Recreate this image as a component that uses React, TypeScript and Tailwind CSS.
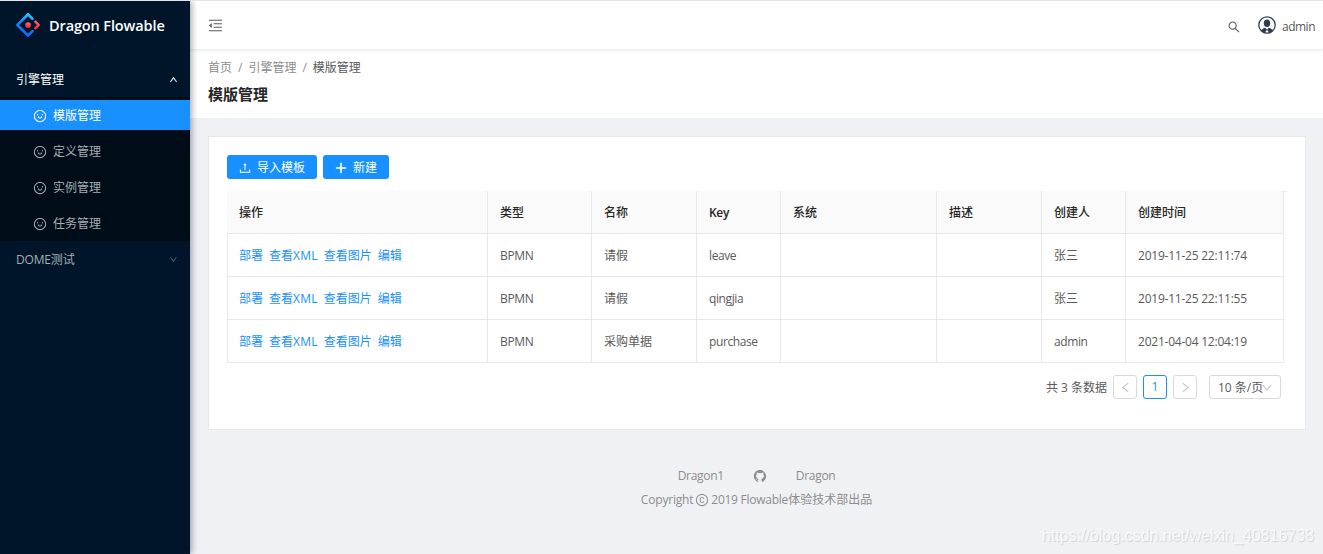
import { useState } from "react"
import {
  AiOutlineMenuFold,
  AiOutlineSearch,
  AiOutlineSmile,
  AiOutlineUp,
  AiOutlineDown,
  AiOutlineLeft,
  AiOutlineRight,
  AiOutlineUpload,
  AiOutlinePlus,
  AiOutlineCopyright,
  AiFillGithub,
} from "react-icons/ai"

const menuItems = ["模版管理", "定义管理", "实例管理", "任务管理"]

const columns = [
  { title: "操作", width: "w-[261px]" },
  { title: "类型", width: "w-[104px]" },
  { title: "名称", width: "w-[105px]" },
  { title: "Key", width: "w-[84px]" },
  { title: "系统", width: "w-[156px]" },
  { title: "描述", width: "w-[105px]" },
  { title: "创建人", width: "w-[84px]" },
  { title: "创建时间", width: "w-[158px]" },
]

const rows = [
  { type: "BPMN", name: "请假", key: "leave", system: "", desc: "", creator: "张三", time: "2019-11-25 22:11:74" },
  { type: "BPMN", name: "请假", key: "qingjia", system: "", desc: "", creator: "张三", time: "2019-11-25 22:11:55" },
  { type: "BPMN", name: "采购单据", key: "purchase", system: "", desc: "", creator: "admin", time: "2021-04-04 12:04:19" },
]

function Logo() {
  return (
    <svg className="size-6 shrink-0" viewBox="0 0 200 200">
      <defs>
        <linearGradient id="blue" x1="62%" y1="0%" x2="40%" y2="100%">
          <stop offset="0%" stopColor="#29cdff" />
          <stop offset="38%" stopColor="#148eff" />
          <stop offset="100%" stopColor="#0a60ff" />
        </linearGradient>
        <linearGradient id="red" x1="69%" y1="-13%" x2="54%" y2="120%">
          <stop offset="0%" stopColor="#fa816e" />
          <stop offset="41%" stopColor="#f74a5c" />
          <stop offset="100%" stopColor="#f51d2c" />
        </linearGradient>
      </defs>
      <path
        fill="url(#blue)"
        d="M91.588 4.177 4.18 91.513c-4.7 4.695-4.7 12.279 0 16.974l87.408 87.336c4.7 4.696 12.29 4.696 16.989 0l36.648-36.618c4.209-4.205 4.209-11.023 0-15.228s-11.031-4.205-15.24 0l-27.783 27.76c-1.17 1.17-2.945 1.17-4.114 0l-69.802-69.744c-1.17-1.169-1.17-2.942 0-4.111l69.802-69.744c1.17-1.169 2.944-1.169 4.114 0l27.783 27.76c4.209 4.205 11.032 4.205 15.24 0s4.209-11.022 0-15.227L108.58 4.056c-4.718-4.594-12.311-4.557-16.992.12Z"
      />
      <path
        fill="url(#red)"
        d="M153.686 135.855c4.208 4.205 11.031 4.205 15.24 0l27.034-27.012c4.7-4.696 4.7-12.28 0-16.974l-27.27-27.151c-4.218-4.2-11.043-4.194-15.254.014-4.209 4.205-4.209 11.022 0 15.227l18.418 18.403c1.17 1.17 1.17 2.943 0 4.111l-18.168 18.154c-4.209 4.205-4.209 11.023 0 15.228Z"
      />
      <circle cx="100.5" cy="100.4" r="23.6" fill="url(#red)" />
    </svg>
  )
}

function Avatar() {
  return (
    <svg className="size-[18px]" viewBox="0 0 18 18" fill="none">
      <circle cx="9" cy="9" r="8.2" stroke="#364153" strokeWidth="1.3" />
      <ellipse cx="9" cy="7.3" rx="3.2" ry="3.7" fill="#2f3b4e" />
      <path d="M3 14.6c1.1-1.7 2.6-2.4 4.3-2.8L9 13.8l1.7-2c1.7.4 3.2 1.1 4.3 2.8a8.6 8.6 0 0 1-4.2 2.8L10 14.6H8l-.8 2.8A8.6 8.6 0 0 1 3 14.6Z" fill="#2f3b4e" />
    </svg>
  )
}

function SideBar() {
  const [selected, setSelected] = useState(menuItems[0])
  const [open, setOpen] = useState(true)

  return (
    <aside className="z-10 w-[190px] shrink-0 bg-[#001529] text-[#a6adb4] shadow-[2px_0_6px_rgba(0,21,41,0.35)]">
      <div className="flex h-[48px] items-center gap-[9px] pl-4">
        <Logo />
        <h1 className="pt-[2px] text-[14.5px] font-semibold tracking-[-0.12px] whitespace-nowrap text-white">Dragon Flowable</h1>
      </div>
      <nav className="pt-3">
        <div className="my-[3px] flex h-[30px] cursor-pointer items-center justify-between pr-3 pl-4 text-white" onClick={() => setOpen(!open)}>
          <span className="pt-[2px]">引擎管理</span>
          <AiOutlineUp className="size-[9px] stroke-[40]" />
        </div>
        {
          open && (
            <ul className="flex flex-col gap-[6px] bg-[#000c17] py-[3px]">
              {menuItems.map((item) => (
                <li
                  key={item}
                  onClick={() => setSelected(item)}
                  className={`flex h-[30px] cursor-pointer items-center gap-[6px] pt-[2px] pl-[33px] ${item === selected ? "bg-[#1890ff] text-white" : ""}`}
                >
                  <AiOutlineSmile className="size-[14px]" />
                  <span>{item}</span>
                </li>
              ))}
            </ul>
          )
        }
        <div className="my-[3px] flex h-[30px] items-center justify-between pr-3 pl-4">
          <span className="pt-[2px]"><span className="tracking-[-0.2px]">DOME</span>测试</span>
          <AiOutlineDown className="size-[9px] opacity-60" />
        </div>
      </nav>
    </aside>
  )
}

function TableData() {
  const cell = "border-r border-b border-[#e8e8e8] pt-[2px] pl-3"
  return (
    <div className="relative mt-3">
      <table className="w-[1057px] table-fixed border-separate border-spacing-0 text-left">
        <thead>
          <tr className="h-[43px] bg-[#fafafa] text-[#262626]">
            {columns.map((col) => (
              <th key={col.title} className={`${col.width} border-r border-b border-[#e8e8e8] pt-[2px] pl-3 font-medium`}>
                {col.title === "Key" ? <span className="font-semibold tracking-[-0.3px]">Key</span> : col.title}
              </th>
            ))}
          </tr>
        </thead>
        <tbody>
          {rows.map((row) => (
            <tr key={row.time} className="h-[43px]">
              <td className="border-r border-b border-l border-[#e8e8e8] pt-[2px] pl-[11px]">
                <div className="flex gap-[6px] text-[#1890ff]">
                  <a>部署</a>
                  <a>查看<span className="tracking-[0.2px]">XML</span></a>
                  <a>查看图片</a>
                  <a>编辑</a>
                </div>
              </td>
              <td className={`${cell} tracking-[-0.3px]`}>{row.type}</td>
              <td className={cell}>{row.name}</td>
              <td className={`${cell} tracking-[-0.5px]`}><span className="tracking-[-0.4px]">{row.key}</span></td>
              <td className={cell}>{row.system}</td>
              <td className={cell}>{row.desc}</td>
              <td className={cell}>
                {row.creator === "admin" ? <span className="tracking-[-0.4px]">admin</span> : row.creator}
              </td>
              <td className={`${cell} tracking-[-0.23px]`}>{row.time}</td>
            </tr>
          ))}
        </tbody>
      </table>
      <div className="absolute top-0 right-0 h-px w-[5px] bg-[#e8e8e8]" />
    </div>
  )
}

function Pagination() {
  return (
    <div className="mt-3 mr-[6px] flex h-6 items-center justify-end gap-[6px]">
      <span className="pt-px">共 3 条数据</span>
      <button className="flex size-6 items-center justify-center rounded-[3px] border border-[#d9d9d9] text-[#bfbfbf]">
        <AiOutlineLeft className="size-[13px]" />
      </button>
      <button className="flex size-6 items-center justify-center rounded-[3px] border border-[#1890ff] text-[#1890ff]">1</button>
      <button className="flex size-6 items-center justify-center rounded-[3px] border border-[#d9d9d9] text-[#bfbfbf]">
        <AiOutlineRight className="size-[13px]" />
      </button>
      <div className="ml-[6px] flex h-6 w-[72px] items-center rounded-[3px] border border-[#d9d9d9] pl-2 whitespace-nowrap">
        <span className="w-[43px] pt-[2px]">10 条/页</span>
        <AiOutlineDown className="mt-px size-3 shrink-0 text-[#bfbfbf]" />
      </div>
    </div>
  )
}

export default function App() {
  return (
    <div className="flex h-[554px] w-[1323px] overflow-hidden border-t border-[#e4e4e4] bg-[#f0f1f5] font-['Open_Sans','Noto_Sans_CJK_SC',sans-serif] text-[12px] leading-[18px] text-[#595959]">
      <SideBar />
      <div className="flex min-w-0 flex-1 flex-col">
        <header className="z-[1] flex h-12 shrink-0 items-center bg-white pr-2 pl-[17px] shadow-[0_1px_3px_rgba(0,21,41,0.12)]">
          <AiOutlineMenuFold className="mt-px size-[17px]" />
          <AiOutlineSearch className="mt-[4px] mr-[17px] ml-auto size-[14px]" />
          <Avatar />
          <span className="ml-[6px] pt-[3px] tracking-[-0.5px]">admin</span>
        </header>
        <div className="h-[69px] shrink-0 bg-white pt-[10px] pl-[18px]">
          <div className="flex text-[#8c8c8c]">
            <span>首页</span>
            <span className="mx-[6px]">/</span>
            <span>引擎管理</span>
            <span className="mx-[6px]">/</span>
            <span className="text-[#595959]">模版管理</span>
          </div>
          <h2 className="mt-[5px] text-[15px] leading-[24px] font-semibold text-[#262626]">模版管理</h2>
        </div>
        <main className="mt-[18px] ml-[18px] h-[294px] w-[1098px] shrink-0 border border-[#e8e8e8] bg-white p-[18px]">
          <div className="flex gap-[6px] text-white">
            <button className="flex h-6 w-[90px] items-center gap-[5px] rounded-[3px] bg-[#1890ff] pt-px pl-[11px]">
              <AiOutlineUpload className="size-[14px]" />
              导入模板
            </button>
            <button className="flex h-6 w-[66px] items-center gap-[5px] rounded-[3px] bg-[#1890ff] pt-px pl-[11px]">
              <AiOutlinePlus className="size-[14px] stroke-[40]" />
              新建
            </button>
          </div>
          <TableData />
          <Pagination />
        </main>
        <footer className="mt-[37px] text-center text-[#8c8c8c]">
          <div className="flex items-center justify-center gap-[29px]">
            <a className="tracking-[-0.3px]">Dragon1</a>
            <AiFillGithub className="size-[14px]" />
            <a className="tracking-[-0.3px]">Dragon</a>
          </div>
          <div className="mt-[6px] flex items-center justify-center">
            <span className="tracking-[-0.2px]">Copyright</span>
            <AiOutlineCopyright className="mx-[2px] size-[14px]" />
            <span className="tracking-[-0.25px]">2019 Flowable</span>体验技术部出品
          </div>
        </footer>
        <div className="mt-[18px] mr-[9px] self-end font-['Liberation_Sans',sans-serif] text-[16px] text-[#f8f9fb] [text-shadow:1px_1px_1px_#cfd0d4]">
          https://blog.csdn.net/weixin_40816738
        </div>
      </div>
    </div>
  )
}
